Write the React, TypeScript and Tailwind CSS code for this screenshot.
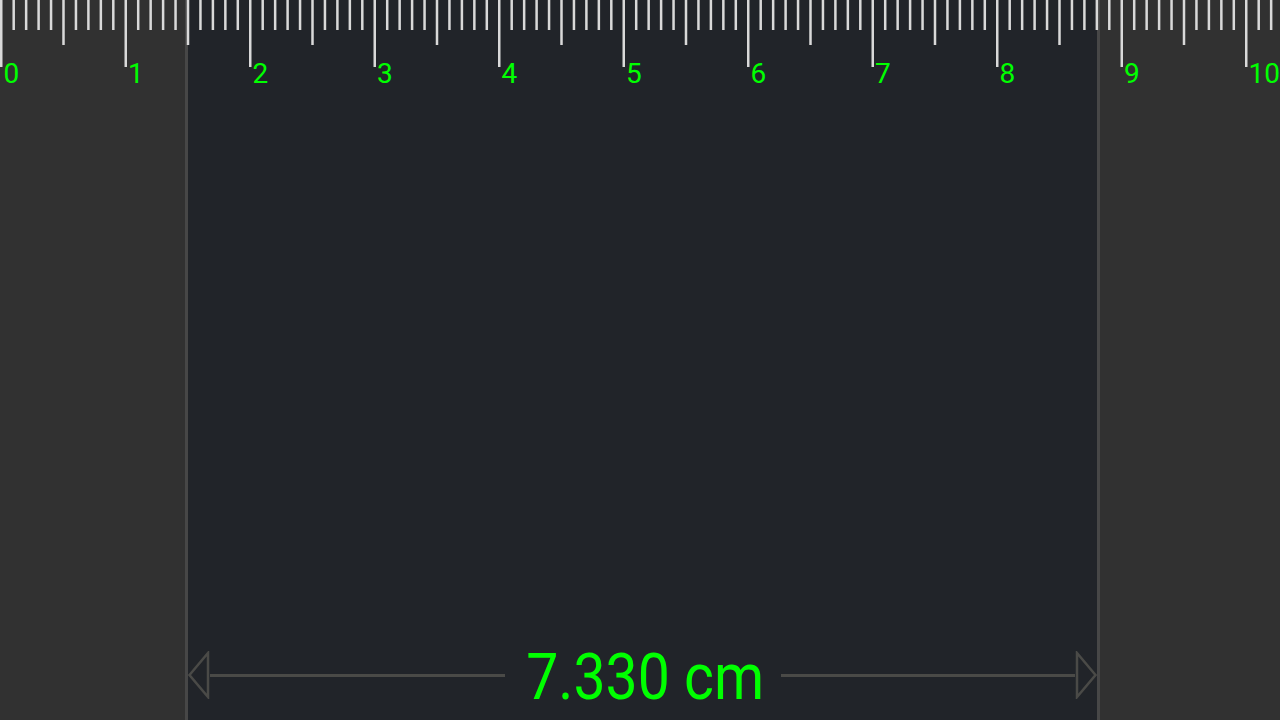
import React from 'react';

const MM = 12.45;

const Ruler: React.FC = () => {
    const ticks = Array.from({ length: 103 }, (_, i) => i);
    return (
        <svg className="absolute left-0 top-0" width={1280} height={90} viewBox="0 0 1280 90">
            {ticks.map((i) => {
                const h = i % 10 === 0 ? 67 : i % 5 === 0 ? 45 : 30;
                return <rect key={i} x={i * MM} y={0} width={2.5} height={h} fill="#d9d9d9" />;
            })}
            {Array.from({ length: 11 }, (_, n) => (
                <text
                    key={n}
                    x={n * MM * 10 + 3.5}
                    y={83}
                    fill="#00ff00"
                    fontSize={28}
                    fontFamily="Roboto, 'Liberation Sans', sans-serif"
                >
                    {n}
                </text>
            ))}
        </svg>
    );
};

const Arrow: React.FC<{ dir: 'left' | 'right' }> = ({ dir }) => (
    <svg width={22} height={48} viewBox="0 0 22 48" className="shrink-0">
        {dir === 'left' ? (
            <polygon points="1.5,24 20,2 20,46" fill="none" stroke="#4a4a47" strokeWidth={2.5} />
        ) : (
            <polygon points="20.5,24 2,2 2,46" fill="none" stroke="#4a4a47" strokeWidth={2.5} />
        )}
    </svg>
);

const App: React.FC = () => {
    return (
        <div className="relative w-[1280px] h-[720px] overflow-hidden flex bg-[#313131]">
            <div className="w-[185px] shrink-0 bg-[#313131]" />
            <div className="w-[915px] shrink-0 bg-[#212429] border-x-[3px] border-[#474747] flex flex-col justify-end">
                <div className="h-[90px] flex items-center">
                    <Arrow dir="left" />
                    <div className="flex-1 h-[3px] bg-[#4a4a47]" />
                    <div className="w-[276px] flex justify-center">
                        <span
                            className="pt-1 translate-x-[3px] scale-x-[0.88] whitespace-nowrap text-[65px] leading-none text-[#00ff00]"
                            style={{ fontFamily: "Roboto, 'Liberation Sans', sans-serif" }}
                        >
                            7.330 cm
                        </span>
                    </div>
                    <div className="flex-1 h-[3px] bg-[#4a4a47]" />
                    <Arrow dir="right" />
                </div>
            </div>
            <div className="flex-1 bg-[#313131]" />
            <Ruler />
        </div>
    );
};

export default App;
